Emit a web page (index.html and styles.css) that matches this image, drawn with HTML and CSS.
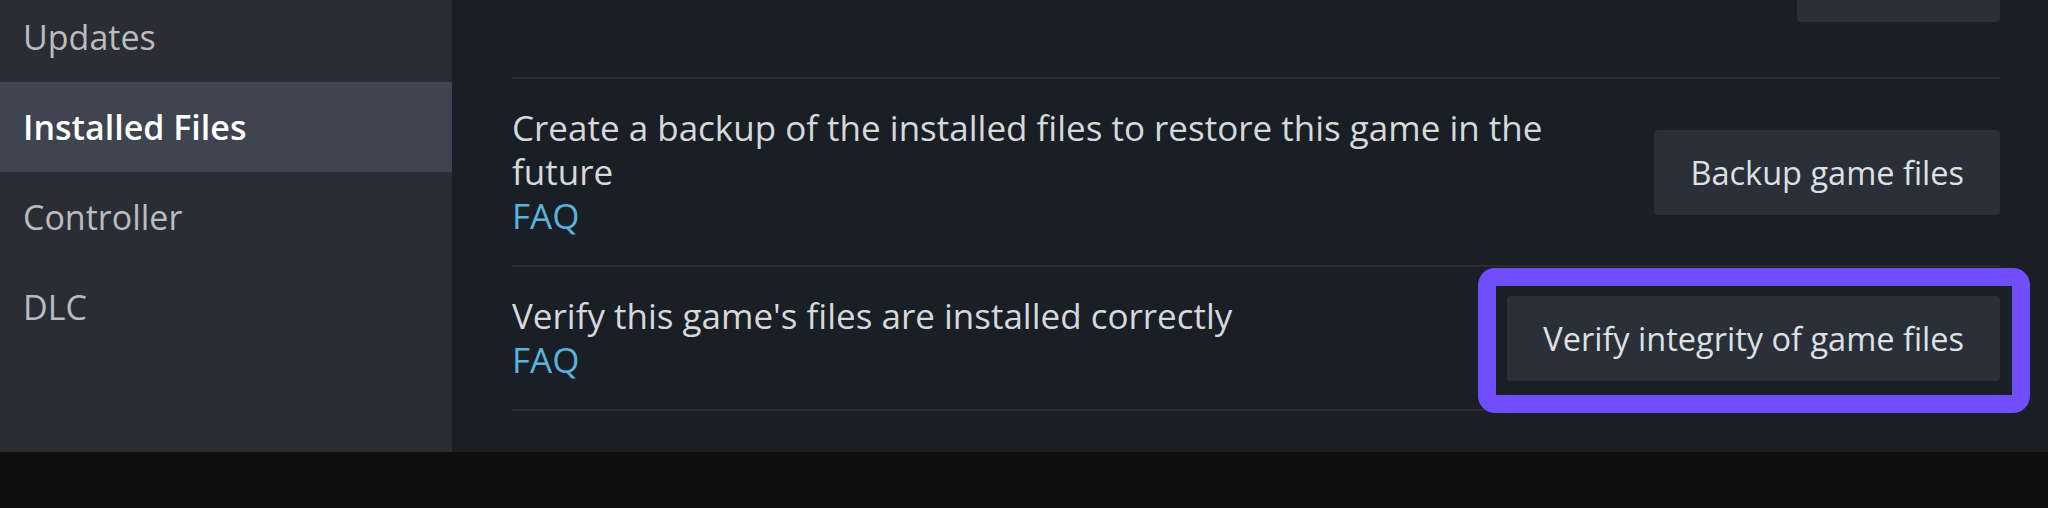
FILE: index.html
```html
<!DOCTYPE html>
<html lang="en">
<head>
<meta charset="utf-8">
<title>Installed Files</title>
<link rel="stylesheet" href="styles.css">
</head>
<body>
<div class="app">
  <div class="main">
    <nav class="sidebar">
      <ul class="nav-list">
        <li class="nav-item">Updates</li>
        <li class="nav-item active">Installed Files</li>
        <li class="nav-item">Controller</li>
        <li class="nav-item">DLC</li>
      </ul>
    </nav>
    <section class="content">
      <div class="row row-prev">
        <button class="btn btn-prev" type="button"></button>
      </div>
      <div class="row">
        <div class="desc">
          <p class="desc-text">Create a backup of the installed files to restore this game in the future</p>
          <a class="faq" href="#">FAQ</a>
        </div>
        <div class="action">
          <button class="btn" type="button">Backup game files</button>
        </div>
      </div>
      <div class="row">
        <div class="desc">
          <p class="desc-text">Verify this game's files are installed correctly</p>
          <a class="faq" href="#">FAQ</a>
        </div>
        <div class="action highlighted">
          <button class="btn" type="button">Verify integrity of game files</button>
          <span class="highlight"></span>
        </div>
      </div>
    </section>
  </div>
  <div class="footer"></div>
</div>
</body>
</html>
```

FILE: styles.css
```css
* { box-sizing: border-box; }

html, body {
  margin: 0;
  padding: 0;
  background: #0f0f0f;
}

body {
  font-family: "Open Sans", "Noto Sans", sans-serif;
  width: 2048px;
  height: 508px;
  overflow: hidden;
}

.app {
  display: flex;
  flex-direction: column;
  height: 508px;
}

.main {
  display: flex;
  height: 452px;
  overflow: hidden;
}

.sidebar {
  width: 452px;
  flex: 0 0 452px;
  background: #2a2d34;
  overflow: hidden;
}

.nav-list {
  list-style: none;
  margin: -8px 0 0 0;
  padding: 0;
}

.nav-item {
  height: 90px;
  display: flex;
  align-items: center;
  padding-left: 23px;
  font-size: 34px;
  color: #b9bdc2;
}

.nav-item.active {
  background: #3e4450;
  color: #ffffff;
  font-weight: 600;
}

.content {
  flex: 1;
  background: #1a1e25;
  padding: 0 48px 0 60px;
  overflow: hidden;
}

.row {
  display: flex;
  align-items: center;
  justify-content: space-between;
  padding: 27px 0;
  border-bottom: 2px solid #262a31;
}

.row-prev {
  margin-top: -63px;
  padding: 0 0 55px 0;
  justify-content: flex-end;
}

.desc {
  max-width: 1070px;
  display: flex;
  flex-direction: column;
}

.desc-text {
  margin: 0;
  font-size: 35px;
  line-height: 44px;
  color: #d6d9dc;
}

.faq {
  font-size: 35px;
  line-height: 44px;
  color: #56b4df;
  text-decoration: none;
}

.action {
  position: relative;
  flex: 0 0 auto;
}

.btn {
  height: 85px;
  padding: 0 36px;
  border: none;
  border-radius: 4px;
  background: #2b2f37;
  color: #dde1e5;
  font-family: "Open Sans", "Noto Sans", sans-serif;
  font-size: 32.5px;
  display: block;
}

.btn-prev {
  width: 203px;
}

.highlight {
  position: absolute;
  top: -28px;
  right: -30px;
  bottom: -32px;
  left: -29px;
  border: 18px solid #704dff;
  border-radius: 17px;
  pointer-events: none;
}

.footer {
  height: 56px;
  background: #0f0f0f;
}
```
